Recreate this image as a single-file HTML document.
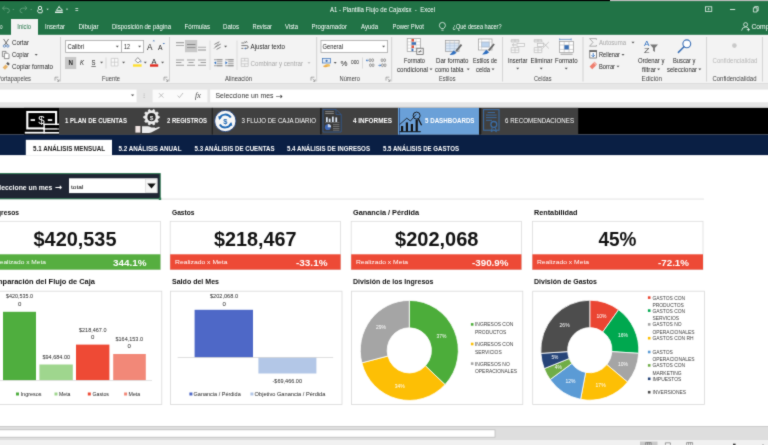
<!DOCTYPE html>
<html lang="es"><head><meta charset="utf-8"><title>Plantilla Flujo de Caja - Excel</title>
<style>
html,body{margin:0;padding:0;}
body{width:768px;height:445px;overflow:hidden;background:#fff;position:relative;font-family:"Liberation Sans", sans-serif;}
#r{position:absolute;left:-4px;top:-4px;width:776px;height:453px;filter:url(#soft);will-change:transform;}
#i{position:absolute;left:4px;top:4px;width:768px;height:445px;}
#i svg{position:absolute;left:0;top:0;overflow:visible;}
text{white-space:pre;}
</style></head>
<body><svg width="0" height="0" style="position:absolute"><filter id="soft" x="0" y="0" width="1" height="1" color-interpolation-filters="sRGB"><feConvolveMatrix order="3" kernelMatrix="1 4 1 4 26 4 1 4 1" divisor="46" edgeMode="duplicate" preserveAlpha="true"/></filter></svg><div id="r"><div id="i">
<svg width="768" height="445" viewBox="0 0 768 445">
<g id="shapes">
<rect x="-5" y="-5" width="778" height="455" fill="#fff" />
<rect x="-5" y="-5" width="778" height="39.9" fill="#217346" />
<rect x="-5" y="-5" width="615" height="6.1" fill="#000" />
<rect x="610" y="-5" width="163" height="6.1" fill="#bdbdbd" />
<rect x="11" y="19" width="27" height="16.5" fill="#f3f3f3" />
<rect x="-5" y="34.9" width="778" height="48.1" fill="#f3f3f3" />
<rect x="-5" y="83" width="778" height="25" fill="#e6e6e6" />
<rect x="-5" y="89.6" width="141.6" height="12.7" fill="#fff" />
<rect x="152.6" y="89.6" width="54.8" height="12.7" fill="#fbfbfb" />
<rect x="210.2" y="89.6" width="562.8" height="12.7" fill="#fff" />
<rect x="-5" y="83" width="778" height="0.9" fill="#dcdcdc" />
<rect x="-5" y="106.6" width="778" height="1.3" fill="#d6d6d6" />
<rect x="-5" y="107.9" width="778" height="26.7" fill="#000" />
<rect x="-5" y="134.6" width="778" height="20.5" fill="#0a1f44" />
<rect x="59" y="107.9" width="261.4" height="26.7" fill="#404040" />
<rect x="211.7" y="107.9" width="1.2" height="26.7" fill="#232323" />
<rect x="320.4" y="107.9" width="1.2" height="26.7" fill="#222" />
<rect x="321.6" y="107.9" width="76.4" height="26.7" fill="#404040" />
<rect x="398" y="107.9" width="81" height="26.7" fill="#6aa0d8" />
<rect x="479" y="107.9" width="2.2" height="26.7" fill="#1c1c1c" />
<rect x="481.2" y="107.9" width="97" height="26.7" fill="#404040" />
<rect x="25.8" y="139.8" width="86.2" height="15.6" fill="#fff" />
<rect x="160" y="198.6" width="544" height="0.9" fill="#e2e2e2" />
<rect x="-5" y="173.6" width="165.2" height="25.2" fill="#1f2533" stroke="#2d7a52" stroke-width="1"/>
<rect x="69" y="178.3" width="88.5" height="14.8" fill="#fff" />
<rect x="145.6" y="179" width="11.4" height="13.4" fill="#f6f6f6" stroke="#c9c9c9" stroke-width="0.5"/>
<path d="M147.3 183.5h8.4l-4.2 4.9z" fill="#111"/>
<rect x="158.8" y="197.6" width="2.4" height="2.4" fill="#2d7a52" />
<rect x="-5" y="221.3" width="165.4" height="48.3" fill="#fff" stroke="#dcdcdc" stroke-width="0.8"/>
<rect x="-5" y="254.3" width="165.4" height="15.3" fill="#56ae40" />
<rect x="170.2" y="221.3" width="170.4" height="48.3" fill="#fff" stroke="#dcdcdc" stroke-width="0.8"/>
<rect x="170.2" y="254.3" width="170.4" height="15.3" fill="#ed4a36" />
<rect x="351.2" y="221.3" width="170.2" height="48.3" fill="#fff" stroke="#dcdcdc" stroke-width="0.8"/>
<rect x="351.2" y="254.3" width="170.2" height="15.3" fill="#ed4a36" />
<rect x="532.4" y="221.3" width="170.6" height="48.3" fill="#fff" stroke="#dcdcdc" stroke-width="0.8"/>
<rect x="532.4" y="254.3" width="170.6" height="15.3" fill="#ed4a36" />
<rect x="-5" y="291.2" width="166.8" height="113.2" fill="#fff" stroke="#d9d9d9" stroke-width="0.8"/>
<rect x="170.5" y="291.2" width="171.5" height="113.2" fill="#fff" stroke="#d9d9d9" stroke-width="0.8"/>
<rect x="351.5" y="291.2" width="171.3" height="113.2" fill="#fff" stroke="#d9d9d9" stroke-width="0.8"/>
<rect x="532.7" y="291.2" width="171.7" height="113.2" fill="#fff" stroke="#d9d9d9" stroke-width="0.8"/>
<rect x="3" y="311.8" width="33" height="68.4" fill="#4fae3e" />
<rect x="39.4" y="364.5" width="33.4" height="15.7" fill="#9fd68e" />
<rect x="76" y="344.6" width="33.4" height="35.6" fill="#ee4a35" />
<rect x="113.2" y="354" width="32.6" height="26.2" fill="#f28878" />
<rect x="-5" y="380.1" width="157" height="0.7" fill="#d9d9d9" />
<rect x="194.6" y="309.8" width="58.4" height="47.6" fill="#4e68c7" />
<rect x="258.4" y="357.4" width="58" height="16.1" fill="#b3c7e7" />
<rect x="177.7" y="357.1" width="155.5" height="0.7" fill="#d0d0d0" />
<rect x="16.0" y="392.5" width="3" height="3" fill="#4fae3e" />
<rect x="54.5" y="392.5" width="3" height="3" fill="#9fd68e" />
<rect x="87.8" y="392.5" width="3" height="3" fill="#ee4a35" />
<rect x="124.1" y="392.5" width="3" height="3" fill="#f28878" />
<rect x="189.4" y="392.5" width="3" height="3" fill="#4e68c7" />
<rect x="250.4" y="392.5" width="3" height="3" fill="#b3c7e7" />
<g transform="translate(409.3 350.4) scale(0.98 1) translate(-409.3 -350.4)"><path d="M409.30 300.40A50 50 0 0 1 445.75 384.63L425.77 365.87A22.6 22.6 0 0 0 409.30 327.80Z" fill="#4cad3a" stroke="#fff" stroke-width="0.8"/>
<path d="M445.75 384.63A50 50 0 0 1 360.87 362.83L387.41 356.02A22.6 22.6 0 0 0 425.77 365.87Z" fill="#fdbf05" stroke="#fff" stroke-width="0.8"/>
<path d="M360.87 362.83A50 50 0 0 1 409.30 300.40L409.30 327.80A22.6 22.6 0 0 0 387.41 356.02Z" fill="#a5a5a5" stroke="#fff" stroke-width="0.8"/></g>
<g transform="translate(589.8 350.2) scale(0.98 1) translate(-589.8 -350.2)"><path d="M589.80 300.20A50 50 0 0 1 619.19 309.75L603.08 331.92A22.6 22.6 0 0 0 589.80 327.60Z" fill="#ea4532" stroke="#fff" stroke-width="0.8"/>
<path d="M619.19 309.75A50 50 0 0 1 639.70 353.34L612.36 351.62A22.6 22.6 0 0 0 603.08 331.92Z" fill="#00a84f" stroke="#fff" stroke-width="0.8"/>
<path d="M639.70 353.34A50 50 0 0 1 628.33 382.07L607.21 364.61A22.6 22.6 0 0 0 612.36 351.62Z" fill="#a5a5a5" stroke="#fff" stroke-width="0.8"/>
<path d="M628.33 382.07A50 50 0 0 1 580.43 399.31L585.57 372.40A22.6 22.6 0 0 0 607.21 364.61Z" fill="#fdbf05" stroke="#fff" stroke-width="0.8"/>
<path d="M580.43 399.31A50 50 0 0 1 549.35 379.59L571.52 363.48A22.6 22.6 0 0 0 585.57 372.40Z" fill="#5b9bd5" stroke="#fff" stroke-width="0.8"/>
<path d="M549.35 379.59A50 50 0 0 1 543.31 368.61L568.79 358.52A22.6 22.6 0 0 0 571.52 363.48Z" fill="#70ad47" stroke="#fff" stroke-width="0.8"/>
<path d="M543.31 368.61A50 50 0 0 1 539.90 353.34L567.24 351.62A22.6 22.6 0 0 0 568.79 358.52Z" fill="#264478" stroke="#fff" stroke-width="0.8"/>
<path d="M539.90 353.34A50 50 0 0 1 589.80 300.20L589.80 327.60A22.6 22.6 0 0 0 567.24 351.62Z" fill="#4d4d4d" stroke="#fff" stroke-width="0.8"/></g>
<rect x="-5" y="426.2" width="778" height="14.3" fill="#dedede" />
<rect x="-5" y="426.2" width="778" height="0.8" fill="#c6c6c6" />
<rect x="-5" y="429.8" width="500" height="7.4" fill="#fff" stroke="#bdbdbd" stroke-width="0.8"/>
<rect x="-5" y="440.5" width="778" height="9.5" fill="#f1f1f1" />
<rect x="640" y="441.6" width="17.5" height="8.4" fill="#c8c8c8" />
<rect x="60.05" y="37" width="0.9" height="44.5" fill="#cfcfcf" />
<rect x="169.05" y="37" width="0.9" height="44.5" fill="#cfcfcf" />
<rect x="316.25" y="37" width="0.9" height="44.5" fill="#cfcfcf" />
<rect x="391.25" y="37" width="0.9" height="44.5" fill="#cfcfcf" />
<rect x="502.15" y="37" width="0.9" height="44.5" fill="#cfcfcf" />
<rect x="582.55" y="37" width="0.9" height="44.5" fill="#cfcfcf" />
<rect x="706.15" y="37" width="0.9" height="44.5" fill="#cfcfcf" />
<rect x="761.95" y="37" width="0.9" height="44.5" fill="#cfcfcf" />
<rect x="105.55" y="57.5" width="0.9" height="11.0" fill="#d6d6d6" />
<rect x="209.55" y="40.5" width="0.9" height="29.5" fill="#dadada" />
<rect x="236.55" y="40.5" width="0.9" height="29.5" fill="#dadada" />
<rect x="362.05" y="57.5" width="0.9" height="11.0" fill="#d6d6d6" />
<rect x="65.6" y="40.4" width="55.8" height="12.0" fill="#fff" stroke="#a9a9a9" stroke-width="0.8"/>
<rect x="121.4" y="40.4" width="22.2" height="12.0" fill="#fff" stroke="#a9a9a9" stroke-width="0.8"/>
<rect x="321" y="40.4" width="66.6" height="12.0" fill="#fff" stroke="#a9a9a9" stroke-width="0.8"/>
<path d="M115.8 45.85h3.0l-1.5 1.5750000000000002z" fill="#555"/>
<path d="M138.1 45.85h3.0l-1.5 1.5750000000000002z" fill="#555"/>
<path d="M382.1 45.85h3.0l-1.5 1.5750000000000002z" fill="#555"/>
<path d="M100.1 61.85h3.0l-1.5 1.5750000000000002z" fill="#555"/>
<path d="M122.1 61.85h3.0l-1.5 1.5750000000000002z" fill="#555"/>
<path d="M143.8 61.85h3.0l-1.5 1.5750000000000002z" fill="#555"/>
<path d="M161.1 61.85h3.0l-1.5 1.5750000000000002z" fill="#555"/>
<path d="M224.1 45.85h3.0l-1.5 1.5750000000000002z" fill="#555"/>
<path d="M333.7 62.05h3.0l-1.5 1.5750000000000002z" fill="#555"/>
<path d="M429.5 68.55h3.0l-1.5 1.5750000000000002z" fill="#555"/>
<path d="M466.7 68.55h3.0l-1.5 1.5750000000000002z" fill="#555"/>
<path d="M491.5 68.55h3.0l-1.5 1.5750000000000002z" fill="#555"/>
<path d="M516.2 67.85h3.0l-1.5 1.5750000000000002z" fill="#555"/>
<path d="M539.7 67.85h3.0l-1.5 1.5750000000000002z" fill="#555"/>
<path d="M564.7 67.85h3.0l-1.5 1.5750000000000002z" fill="#555"/>
<path d="M631.5 41.85h3.0l-1.5 1.5750000000000002z" fill="#555"/>
<path d="M621.5 54.05h3.0l-1.5 1.5750000000000002z" fill="#555"/>
<path d="M616.5 65.65h3.0l-1.5 1.5750000000000002z" fill="#555"/>
<path d="M657.1 68.55h3.0l-1.5 1.5750000000000002z" fill="#555"/>
<path d="M698.3 68.55h3.0l-1.5 1.5750000000000002z" fill="#555"/>
<path d="M34.7 54.05h3.0l-1.5 1.5750000000000002z" fill="#555"/>
<path d="M307.5 62.25h3.0l-1.5 1.5750000000000002z" fill="#b5b5b5"/>
<rect x="65" y="57" width="11.2" height="12" fill="#c8c8c8" />
<rect x="185" y="40" width="12.2" height="12.2" fill="#c8c8c8" />
<path d="M55 80.6v-3.4h3.4M56.6 78.8l2.4 2.4m0.1 -1.9v2h-2" stroke="#777" stroke-width="0.6" fill="none"/>
<path d="M164 80.6v-3.4h3.4M165.6 78.8l2.4 2.4m0.1 -1.9v2h-2" stroke="#777" stroke-width="0.6" fill="none"/>
<path d="M311 80.6v-3.4h3.4M312.6 78.8l2.4 2.4m0.1 -1.9v2h-2" stroke="#777" stroke-width="0.6" fill="none"/>
<path d="M386 80.6v-3.4h3.4M387.6 78.8l2.4 2.4m0.1 -1.9v2h-2" stroke="#777" stroke-width="0.6" fill="none"/>
<rect x="91.4" y="66" width="4.4" height="0.6" fill="#333" />
<g stroke="#3a6fb5" stroke-width="0.7" fill="none"><circle cx="4.4" cy="46" r="1.2"/><circle cx="7.8" cy="46" r="1.2"/></g><path d="M3.6 39l4 6M8.6 39l-4 6" stroke="#555" stroke-width="0.8" fill="none"/>
<path d="M2.4 51.4h3.6v1.4M2.4 51.4v5.2h1.4" stroke="#666" stroke-width="0.7" fill="none"/><path d="M4.4 53.2h3.4l1.2 1.2v4.2h-4.6z" fill="#fff" stroke="#666" stroke-width="0.7"/>
<path d="M2.6 67.4l3-3 2.4 2.4-3 3z" fill="#e8b469"/><path d="M6.2 63.6l1.6-1.6 2 2-1.6 1.6z" fill="#555"/>
<path d="M152.6 41.2l1.2-1.3 1.2 1.3z" fill="#3a6fb5"/><path d="M162.6 43l1.2 1.3 1.2-1.3z" fill="#3a6fb5"/>
<path d="M111.2 58.4h6.8v7.6h-6.8zM114.6 58.4v7.6M111.2 62.2h6.8" stroke="#c4c4c4" stroke-width="0.7" fill="#fafafa"/>
<path d="M135.2 60.4l2.6-2.8 2.8 2.8-2.6 2.6z" fill="#fdfdfd" stroke="#666" stroke-width="0.7"/><path d="M140.9 60.6q1 1.5 0 2.2q-1-0.7 0-2.2z" fill="#3a6fb5"/>
<rect x="133" y="64.3" width="8.6" height="2.4" fill="#ffdf2e" />
<rect x="150" y="64.3" width="8.2" height="2.4" fill="#e0291d" />
<rect x="176" y="42.4" width="8" height="0.8" fill="#777" />
<rect x="176" y="45.2" width="8" height="0.8" fill="#9a9a9a" />
<rect x="187" y="44.2" width="8.4" height="0.8" fill="#777" />
<rect x="187" y="47" width="8.4" height="0.8" fill="#8a8a8a" />
<rect x="198" y="46.8" width="8" height="0.8" fill="#9a9a9a" />
<rect x="198" y="49.6" width="8" height="0.8" fill="#777" />
<rect x="176" y="59.6" width="8" height="0.8" fill="#8a8a8a" />
<rect x="176" y="62.2" width="5.4" height="0.8" fill="#8a8a8a" />
<rect x="176" y="64.8" width="8" height="0.8" fill="#8a8a8a" />
<rect x="187.0" y="59.6" width="8" height="0.8" fill="#8a8a8a" />
<rect x="188.5" y="62.2" width="5" height="0.8" fill="#8a8a8a" />
<rect x="187.0" y="64.8" width="8" height="0.8" fill="#8a8a8a" />
<rect x="198" y="59.6" width="8" height="0.8" fill="#8a8a8a" />
<rect x="200.6" y="62.2" width="5.4" height="0.8" fill="#8a8a8a" />
<rect x="198" y="64.8" width="8" height="0.8" fill="#8a8a8a" />
<path d="M214.4 44.4l5-2.6M215.4 47l5.4-3M216.6 49.4l4-2.2" stroke="#666" stroke-width="0.8" fill="none"/><path d="M214 48.6l4.6-5" stroke="#666" stroke-width="0.6"/>
<rect x="217" y="59.4" width="5.4" height="0.8" fill="#8a8a8a" />
<rect x="217" y="61.4" width="5.4" height="0.8" fill="#8a8a8a" />
<rect x="217" y="63.4" width="5.4" height="0.8" fill="#8a8a8a" />
<rect x="217" y="65.4" width="5.4" height="0.8" fill="#8a8a8a" />
<rect x="214" y="59.4" width="8.4" height="0.8" fill="#8a8a8a" />
<rect x="214" y="65.4" width="8.4" height="0.8" fill="#8a8a8a" />
<rect x="228.2" y="59.4" width="5.4" height="0.8" fill="#8a8a8a" />
<rect x="228.2" y="61.4" width="5.4" height="0.8" fill="#8a8a8a" />
<rect x="228.2" y="63.4" width="5.4" height="0.8" fill="#8a8a8a" />
<rect x="228.2" y="65.4" width="5.4" height="0.8" fill="#8a8a8a" />
<rect x="225.2" y="59.4" width="8.4" height="0.8" fill="#8a8a8a" />
<rect x="225.2" y="65.4" width="8.4" height="0.8" fill="#8a8a8a" />
<path d="M214 62.8l2.2-1.6v3.2z" fill="#2f6fc0"/><path d="M227.6 62.8l-2.2-1.6v3.2z" fill="#2f6fc0"/>
<path d="M241.4 43h3M241.4 45.6h5.4q1.4 0 1.4 1.4t-1.4 1.4h-1.6M241.4 48.4h2" stroke="#555" stroke-width="0.8" fill="none"/><path d="M245.6 47.2v2.4l-1.4-1.2z" fill="#3a6fb5"/><path d="M244.6 41.4l0.8 1.6 1-1.8 0.9 1.6" stroke="#555" stroke-width="0.6" fill="none"/>
<path d="M241.2 58.4h7v8h-7zM241.2 61h7M241.2 63.8h7M244.7 58.4v2.6M244.7 63.8v2.6" stroke="#bdbdbd" stroke-width="0.7" fill="#f6f6f6"/>
<rect x="322.6" y="58.6" width="8" height="4.4" fill="#dfe9f6" stroke="#3a6fb5" stroke-width="0.7"/><circle cx="326.6" cy="60.8" r="1.1" fill="#3a6fb5"/><ellipse cx="327.6" cy="65.4" rx="2.6" ry="1.3" fill="#f0c060"/><ellipse cx="325.4" cy="66.2" rx="2.2" ry="1" fill="#e8a94a"/>
<g fill="none" stroke="#666" stroke-width="0.6"><rect x="369.2" y="58.8" width="1.7" height="2.8" rx="0.8"/><rect x="371.8" y="58.8" width="1.7" height="2.8" rx="0.8"/><rect x="369.6" y="63.8" width="1.7" height="2.8" rx="0.8"/><rect x="372.2" y="63.8" width="1.7" height="2.8" rx="0.8"/></g>
<g fill="none" stroke="#666" stroke-width="0.6"><rect x="381.2" y="58.8" width="1.7" height="2.8" rx="0.8"/><rect x="383.8" y="58.8" width="1.7" height="2.8" rx="0.8"/><rect x="381.6" y="63.8" width="1.7" height="2.8" rx="0.8"/><rect x="384.2" y="63.8" width="1.7" height="2.8" rx="0.8"/></g>
<path d="M366.2 60.400h2.400M366.200 60.400l1.100-1M366.200 60.400l1.100 1" stroke="#2f6fc0" stroke-width="0.7" fill="none"/><path d="M378.400 65.400h2.400M380.800 65.400l-1.100-1M380.800 65.400l-1.100 1" stroke="#2f6fc0" stroke-width="0.7" fill="none"/>
<rect x="407.2" y="38.6" width="13.4" height="13" fill="#fff" stroke="#9a9a9a" stroke-width="0.7"/><path d="M407.2 41.8h13.4M407.2 45h13.4M407.2 48.2h13.4M411.4 38.6v13M416 38.6v13" stroke="#bbb" stroke-width="0.5"/><rect x="411.6" y="39" width="2.4" height="2.6" fill="#e0533c"/><rect x="411.6" y="42.2" width="4.4" height="2.6" fill="#3a6fb5"/><rect x="411.6" y="45.4" width="2.4" height="2.6" fill="#e0533c"/><rect x="411.6" y="48.6" width="1.8" height="2.6" fill="#3a6fb5"/><rect x="416.8" y="48.2" width="6.4" height="6.2" fill="#f5f5f5" stroke="#555" stroke-width="0.7"/><path d="M418.4 51.6h3.2M418.8 52.8l2.4-3" stroke="#444" stroke-width="0.6"/>
<rect x="445.4" y="40.6" width="13.6" height="10.8" fill="#dbe7f5" stroke="#9a9a9a" stroke-width="0.7"/><rect x="445.4" y="40.6" width="13.6" height="2.4" fill="#f4f4f4" stroke="#9a9a9a" stroke-width="0.5"/><path d="M445.4 45.8h13.6M445.4 48.6h13.6M449.9 40.6v10.8M454.4 40.6v10.8" stroke="#a9bcd6" stroke-width="0.5"/><path d="M455.4 50.6l5.4-6.6 1.4 1.2-5.2 6.4z" fill="#666"/><path d="M449.6 55l4-4.6 3 2.4q-2.4 2.6-7 2.2z" fill="#2f6fc0"/>
<rect x="478.4" y="39" width="13.6" height="11" fill="#fff" stroke="#9a9a9a" stroke-width="0.7"/><rect x="481.6" y="42" width="7.6" height="5" fill="#bcd4ef" stroke="#8aa8cf" stroke-width="0.5"/><path d="M478.400 42h13.6M478.4 47h13.6M481.6 39v11M489.2 39v11" stroke="#c4c4c4" stroke-width="0.5"/><path d="M488 50l5.400-6.600 1.400 1.200-5.200 6.400z" fill="#666"/><path d="M482.2 54.400l4-4.600 3 2.400q-2.400 2.600-7 2.200z" fill="#2f6fc0"/>
<path d="M511.2 39.6h7.6v2.4h-7.6zM515.0 39.6v2.4M511.2 40.800000000000004h7.6" stroke="#bdbdbd" stroke-width="0.7" fill="#f8f8f8"/>
<rect x="517" y="43.4" width="7.4" height="3" fill="#f8f8f8" stroke="#bdbdbd" stroke-width="0.7"/>
<path d="M511.2 47.6h7.6v5h-7.6zM515.0 47.6v5M511.2 50.1h7.6" stroke="#bdbdbd" stroke-width="0.7" fill="#f8f8f8"/>
<path d="M516.2 44.900h-3.800m1.500-1.400l-1.500 1.400 1.500 1.400" stroke="#b0b0b0" stroke-width="0.7" fill="none"/>
<path d="M534.2 39.6h7.6v2.4h-7.6zM538.0 39.6v2.4M534.2 40.800000000000004h7.6" stroke="#bdbdbd" stroke-width="0.7" fill="#f8f8f8"/>
<rect x="537.6" y="43.4" width="6" height="3" fill="#f8f8f8" stroke="#bdbdbd" stroke-width="0.7"/>
<path d="M534.2 47.6h7.6v5h-7.6zM538.0 47.6v5M534.2 50.1h7.6" stroke="#bdbdbd" stroke-width="0.7" fill="#f8f8f8"/>
<path d="M542.4 42l6.400 6.400M548.8 42l-6.400 6.400" stroke="#b0b0b0" stroke-width="0.7" fill="none"/>
<rect x="559.6" y="41.600" width="14" height="11" fill="#fff" stroke="#9a9a9a" stroke-width="0.7"/><path d="M564.2 41.600v11M569 41.600v11M559.6 45h14M559.6 49.400h14" stroke="#aaa" stroke-width="0.5"/><rect x="564.400" y="45.200" width="4.400" height="4.200" fill="#3a6fb5"/><path d="M559.6 39.400h11.600M559.6 38.400v2M571.2 38.400v2" stroke="#3a6fb5" stroke-width="0.6"/><path d="M560.6 54.200h12" stroke="#777" stroke-width="0.7"/>
<path d="M596.4 39.800v-1.200h-6.800l3.400 3.700-3.400 3.900h6.800v-1.200" stroke="#9a9a9a" stroke-width="0.8" fill="none"/>
<rect x="589.8" y="50.600" width="6.800" height="7.400" fill="#fff" stroke="#555" stroke-width="0.7"/><rect x="589.8" y="50.600" width="6.800" height="1.300" fill="#555"/><path d="M593.2 53v3.600m-1.600-1.400l1.600 1.600 1.600-1.600" stroke="#2f6fc0" stroke-width="0.9" fill="none"/>
<path d="M589.600 66.600l3.800-3.800 2.600 2.600-3.800 3.800z" fill="#ef7e6e"/><path d="M593.4 62.800l1.200-1.200 2.600 2.600-1.200 1.200z" fill="#f4a79c"/>
<path d="M650 44.400h8l-3.100 3.600v4l-1.800-1.200v-2.800z" fill="#777"/>
<circle cx="686.8" cy="43.800" r="3.900" fill="#fff" stroke="#3a6fb5" stroke-width="1.100"/><path d="M684 46.800l-5.600 5.600" stroke="#3a6fb5" stroke-width="1.500" stroke-linecap="round"/>
<circle cx="734.4" cy="45.600" r="2.300" fill="#c9c9c9"/>
<g stroke="#6aa583" stroke-width="0.8" fill="none"><path d="M2.600 8.200h4.200q2.600 0.200 2.600 2.400t-2.400 2.200M4.600 6.200l-2.200 2 2.200 2"/><path d="M26.800 8.200h-4.200q-2.600 0.200-2.600 2.400t2.400 2.200M24.800 6.200l2.200 2-2.200 2"/></g>
<path d="M12.4 8.9h2l-1 1.05z" fill="#6aa583"/>
<path d="M30.2 8.9h2l-1 1.05z" fill="#6aa583"/>
<g stroke="#fff" stroke-width="0.9" fill="none"><circle cx="40" cy="8" r="1.700"/><path d="M38 9.600q-1 1.800 0.600 3.200h3.200q1-1.600 0.200-3.200"/></g>
<path d="M46.5 8.85h2.2l-1.1 1.1550000000000002z" fill="#fff"/>
<path d="M56.400 10.400l2.400-3.400 2.600 1.800 1 1.600z" fill="none" stroke="#fff" stroke-width="0.8"/><path d="M58.800 7l0.600-1.200" stroke="#fff" stroke-width="0.7"/>
<rect x="55" y="11.6" width="7.8" height="1.3" fill="#fff" />
<path d="M65.9 8.85h2.2l-1.1 1.1550000000000002z" fill="#fff"/>
<rect x="75.4" y="8.2" width="2.8" height="0.7" fill="#fff" />
<rect x="75.4" y="10.2" width="2.8" height="0.7" fill="#fff" />
<rect x="705.4" y="6.800" width="6.400" height="4.800" fill="none" stroke="#fff" stroke-width="0.7"/><path d="M708.600 8.200v2.200m-1-1l1-1.100 1 1.100" stroke="#fff" stroke-width="0.600" fill="none"/>
<rect x="730" y="9.2" width="5.2" height="0.8" fill="#fff" />
<path d="M753.400 7.800h3.600v4.200h-3.600zM754.600 7.800v-1.200h3.600v4.200h-1.200" stroke="#fff" stroke-width="0.700" fill="none"/>
<path d="M441.200 28.600q-1.800-1.600-1.800-3.200a3 3 0 0 1 6 0q0 1.600-1.800 3.200zM441.400 30.200h2.200" stroke="#fff" stroke-width="0.700" fill="none"/>
<g stroke="#fff" stroke-width="0.700" fill="none"><circle cx="745.6" cy="24.600" r="2"/><path d="M741.600 30.600q0.400-3.600 4-3.600q1.600 0 2.600 1"/><path d="M746.800 29.600h3.200M748.400 28v3.200"/></g>
<g stroke="#b0b0b0" stroke-width="0.800" fill="none"><path d="M159 93.200l4.400 4.400M163.400 93.200l-4.400 4.400"/><path d="M177.600 95.600l1.800 2 3.600-4.600"/></g>
<path d="M130.9 94.55000000000001h3.4l-1.7 1.785z" fill="#555"/>
<rect x="143.7" y="93.6" width="0.8" height="0.8" fill="#a0a0a0" />
<rect x="143.7" y="95.4" width="0.8" height="0.8" fill="#a0a0a0" />
<rect x="143.7" y="97.2" width="0.8" height="0.8" fill="#a0a0a0" />
<g stroke="#666" stroke-width="0.6" fill="none"><path d="M645.600 445v-2.400h5.600v2.400M647.500 442.600v2.400M649.300 442.600v2.400"/><path d="M665.400 445v-2.200h5v2.200"/><path d="M686.600 445v-2.400h6v2.400M688.600 442.600v2.400M690.600 442.600v2.400"/></g>
<rect x="733" y="443.6" width="2.6" height="6.4" fill="#444" />
<rect x="762.6" y="444.2" width="0.8" height="5.8" fill="#777" />
<rect x="24" y="107.9" width="35" height="26.7" fill="#000" />
<rect x="27.300" y="112" width="28.800" height="16.400" fill="none" stroke="#fff" stroke-width="2.100"/>
<rect x="30.6" y="119.2" width="4.4" height="1.7" fill="#fff" />
<rect x="47.8" y="119.2" width="4.4" height="1.7" fill="#fff" />
<rect x="43.4" y="123.6" width="15.6" height="1.5" fill="#fff" />
<rect x="43.4" y="123.6" width="1.5" height="9.8" fill="#fff" />
<rect x="43.4" y="128.3" width="15.6" height="1.4" fill="#fff" />
<rect x="24.8" y="131.8" width="34.2" height="1.8" fill="#fff" />
<rect x="44.9" y="125.1" width="14.1" height="3.2" fill="#000" />
<rect x="44.9" y="129.7" width="14.1" height="2.1" fill="#000" />
<polygon points="159.37,116.57 159.38,117.81 157.65,118.67 157.34,119.61 158.24,121.32 157.51,122.32 155.61,122.00 154.81,122.58 154.53,124.49 153.36,124.88 152.01,123.50 151.01,123.50 149.67,124.88 148.49,124.50 148.21,122.59 147.40,122.01 145.50,122.34 144.77,121.34 145.66,119.63 145.36,118.68 143.63,117.83 143.62,116.59 145.35,115.73 145.66,114.79 144.76,113.08 145.49,112.08 147.39,112.40 148.19,111.82 148.47,109.91 149.64,109.52 150.99,110.90 151.99,110.90 153.33,109.52 154.51,109.90 154.79,111.81 155.60,112.39 157.50,112.06 158.23,113.06 157.34,114.77 157.64,115.72" fill="#ededed" stroke="#ededed" stroke-width="0.8" stroke-linejoin="round"/>
<circle cx="151.500" cy="117.200" r="4.100" fill="#2b2b2b"/>
<rect x="135.4" y="126" width="5" height="6.6" fill="#f0e4e2" />
<path d="M142 126.200h6q2 0.200 3.400 1.200h3.400q1.200 0.500 0.500 1.500l-3 0.400 6.200-2.400q1.500-0.200 1.200 1l-8 4.400q-1.400 0.600-3 0.600h-6.700z" fill="#ececec"/>
<circle cx="225.300" cy="121" r="10.700" fill="#f7f7f7" stroke="#1e3f7a" stroke-width="0.900"/><g fill="none" stroke="#1f68b4" stroke-width="1.900"><path d="M219.400 118.600a6.400 6.400 0 0 1 11.400-1"/><path d="M231.200 123.400a6.400 6.400 0 0 1-11.400 1"/></g><path d="M218.200 116.200l4 0.400-2.800 3.400z" fill="#1f68b4"/><path d="M232.400 125.800l-4-0.400 2.800-3.400z" fill="#1f68b4"/>
<path d="M323 109.400h13l5.200 5.200v17.400h-18.200z" fill="#3a3a3a" stroke="#33598f" stroke-width="0.900"/><path d="M336 109.400v5.200h5.200" fill="none" stroke="#33598f" stroke-width="0.800"/>
<rect x="325.2" y="111.2" width="8.6" height="0.9" fill="#8c8c8c" />
<rect x="325.2" y="113" width="8.6" height="0.9" fill="#8c8c8c" />
<rect x="326" y="117.2" width="1.7" height="4.8" fill="#dfeaf8" />
<rect x="328.8" y="118.6" width="1.7" height="3.4" fill="#dfeaf8" />
<rect x="332" y="116.6" width="1.7" height="5.4" fill="#dfeaf8" />
<rect x="335.4" y="117.4" width="1.7" height="4.6" fill="#dfeaf8" />
<rect x="325" y="122.2" width="14.4" height="0.7" fill="#777" />
<circle cx="327.800" cy="127.200" r="2.900" fill="#3e68b8"/><path d="M327.800 127.200v-3.300a3.300 3.300 0 0 1 3.300 3.300z" fill="#c9d6ee"/>
<rect x="333" y="124.4" width="6.4" height="0.7" fill="#8c8c8c" />
<rect x="333" y="126.2" width="6.4" height="0.7" fill="#8c8c8c" />
<rect x="333" y="128" width="6.4" height="0.7" fill="#8c8c8c" />
<rect x="333" y="129.8" width="6.4" height="0.7" fill="#8c8c8c" />
<rect x="399" y="108" width="0.7" height="26.5" fill="#1e3f7a" />
<rect x="401" y="126" width="2.2" height="5.6" fill="#111" />
<rect x="405.8" y="122.4" width="2.2" height="9.2" fill="#111" />
<rect x="410.8" y="124" width="2.2" height="7.6" fill="#111" />
<rect x="415.6" y="119.6" width="2.2" height="12.0" fill="#111" />
<rect x="399.4" y="131.2" width="21.4" height="1" fill="#111" />
<path d="M399.600 124.600l7.200-6.400 3.600 2.800 5.800-6.600" fill="none" stroke="#111" stroke-width="0.800"/><circle cx="416.600" cy="115.600" r="3.500" fill="none" stroke="#111" stroke-width="0.900"/><path d="M418.400 119l3.200 6.200" stroke="#111" stroke-width="1.300"/>
<rect x="483.600" y="109.600" width="15.400" height="20.600" fill="none" stroke="#3b6ea8" stroke-width="1"/>
<rect x="487.6" y="112" width="7.4" height="0.9" fill="#3b6ea8" />
<rect x="486" y="114.6" width="10.6" height="0.9" fill="#3b6ea8" />
<rect x="486" y="117.2" width="10.6" height="0.9" fill="#3b6ea8" />
<rect x="486" y="119.8" width="6" height="0.9" fill="#3b6ea8" />
<circle cx="493.800" cy="124.400" r="2.900" fill="#3a3a3a" stroke="#3b6ea8" stroke-width="1.300"/><path d="M492.200 127.600l-1 4.200 2.600-1.800 2.600 1.800-1-4.200" fill="none" stroke="#3b6ea8" stroke-width="0.900"/>
<rect x="470.9" y="323.1" width="2.6" height="2.6" fill="#4cad3a" />
<rect x="470.9" y="342.7" width="2.6" height="2.6" fill="#fdbf05" />
<rect x="470.9" y="362.3" width="2.6" height="2.6" fill="#a5a5a5" />
<rect x="647.9" y="296.3" width="2.6" height="2.6" fill="#ea4532" />
<rect x="647.9" y="309.3" width="2.6" height="2.6" fill="#00a84f" />
<rect x="647.9" y="323.1" width="2.6" height="2.6" fill="#a5a5a5" />
<rect x="647.9" y="336.9" width="2.6" height="2.6" fill="#fdbf05" />
<rect x="647.9" y="350.7" width="2.6" height="2.6" fill="#5b9bd5" />
<rect x="647.9" y="364.1" width="2.6" height="2.6" fill="#70ad47" />
<rect x="647.9" y="377.5" width="2.6" height="2.6" fill="#264478" />
<rect x="647.9" y="390.9" width="2.6" height="2.6" fill="#4d4d4d" />
</g>
<g id="labels" font-family='"Liberation Sans", sans-serif'>
<text x="330" y="11.96" font-size="6.6" fill="#fff" textLength="105" lengthAdjust="spacingAndGlyphs">A1 - Plantilla Flujo de Cajaxlsx  -  Excel</text>
<text x="0" y="29.03" font-size="6.8" fill="#fff" textLength="2.5" lengthAdjust="spacingAndGlyphs">o</text>
<text x="17.3" y="29.03" font-size="6.8" fill="#217346" textLength="13.7" lengthAdjust="spacingAndGlyphs">Inicio</text>
<text x="45" y="29.03" font-size="6.8" fill="#fff" textLength="20" lengthAdjust="spacingAndGlyphs">Insertar</text>
<text x="78.5" y="29.03" font-size="6.8" fill="#fff" textLength="20" lengthAdjust="spacingAndGlyphs">Dibujar</text>
<text x="112" y="29.03" font-size="6.8" fill="#fff" textLength="59" lengthAdjust="spacingAndGlyphs">Disposición de página</text>
<text x="184.5" y="29.03" font-size="6.8" fill="#fff" textLength="25.5" lengthAdjust="spacingAndGlyphs">Fórmulas</text>
<text x="223" y="29.03" font-size="6.8" fill="#fff" textLength="16" lengthAdjust="spacingAndGlyphs">Datos</text>
<text x="252.5" y="29.03" font-size="6.8" fill="#fff" textLength="19.5" lengthAdjust="spacingAndGlyphs">Revisar</text>
<text x="285" y="29.03" font-size="6.8" fill="#fff" textLength="13" lengthAdjust="spacingAndGlyphs">Vista</text>
<text x="311.5" y="29.03" font-size="6.8" fill="#fff" textLength="35.5" lengthAdjust="spacingAndGlyphs">Programador</text>
<text x="361" y="29.03" font-size="6.8" fill="#fff" textLength="17" lengthAdjust="spacingAndGlyphs">Ayuda</text>
<text x="392.5" y="29.03" font-size="6.8" fill="#fff" textLength="31.5" lengthAdjust="spacingAndGlyphs">Power Pivot</text>
<text x="452.5" y="29.03" font-size="6.8" fill="#fff" textLength="49" lengthAdjust="spacingAndGlyphs">¿Qué desea hacer?</text>
<text x="751.5" y="29.03" font-size="6.8" fill="#fff" textLength="29.5" lengthAdjust="spacingAndGlyphs">Compartir</text>
<text x="12" y="45.03" font-size="6.8" fill="#262626" textLength="17" lengthAdjust="spacingAndGlyphs">Cortar</text>
<text x="12" y="57.13" font-size="6.8" fill="#262626" textLength="17" lengthAdjust="spacingAndGlyphs">Copiar</text>
<text x="12" y="68.73" font-size="6.8" fill="#262626" textLength="41" lengthAdjust="spacingAndGlyphs">Copiar formato</text>
<text x="-3" y="81.16" font-size="6.6" fill="#444" textLength="34" lengthAdjust="spacingAndGlyphs">Portapapeles</text>
<text x="102" y="81.16" font-size="6.6" fill="#444" textLength="18" lengthAdjust="spacingAndGlyphs">Fuente</text>
<text x="225" y="81.16" font-size="6.6" fill="#444" textLength="27" lengthAdjust="spacingAndGlyphs">Alineación</text>
<text x="339.5" y="81.16" font-size="6.6" fill="#444" textLength="20.5" lengthAdjust="spacingAndGlyphs">Número</text>
<text x="439" y="81.16" font-size="6.6" fill="#444" textLength="16.5" lengthAdjust="spacingAndGlyphs">Estilos</text>
<text x="534" y="81.16" font-size="6.6" fill="#444" textLength="17.5" lengthAdjust="spacingAndGlyphs">Celdas</text>
<text x="641.5" y="81.16" font-size="6.6" fill="#444" textLength="20.5" lengthAdjust="spacingAndGlyphs">Edición</text>
<text x="712.5" y="81.16" font-size="6.6" fill="#444" textLength="44" lengthAdjust="spacingAndGlyphs">Confidencialidad</text>
<text x="67.5" y="48.93" font-size="6.8" fill="#262626" textLength="16.5" lengthAdjust="spacingAndGlyphs">Calibri</text>
<text x="124" y="48.93" font-size="6.8" fill="#262626" textLength="6" lengthAdjust="spacingAndGlyphs">12</text>
<text x="68.5" y="65.03" font-size="6.8" fill="#262626" font-weight="700" textLength="4.5" lengthAdjust="spacingAndGlyphs">N</text>
<text x="80" y="65.03" font-size="6.8" fill="#262626" font-style="italic" textLength="4" lengthAdjust="spacingAndGlyphs">K</text>
<text x="91.5" y="64.83" font-size="6.8" fill="#262626" textLength="4" lengthAdjust="spacingAndGlyphs">S</text>
<text x="147" y="49.74" font-size="8.2" fill="#262626" textLength="5.5" lengthAdjust="spacingAndGlyphs">A</text>
<text x="158" y="49.81" font-size="7" fill="#262626" textLength="4.5" lengthAdjust="spacingAndGlyphs">A</text>
<text x="151.5" y="64.25" font-size="7.4" fill="#262626" textLength="5" lengthAdjust="spacingAndGlyphs">A</text>
<text x="250.5" y="49.03" font-size="6.8" fill="#262626" textLength="34.5" lengthAdjust="spacingAndGlyphs">Ajustar texto</text>
<text x="250.5" y="65.63" font-size="6.8" fill="#a6a6a6" textLength="52.5" lengthAdjust="spacingAndGlyphs">Combinar y centrar</text>
<text x="322.5" y="49.03" font-size="6.8" fill="#262626" textLength="20.5" lengthAdjust="spacingAndGlyphs">General</text>
<text x="340.5" y="65.72" font-size="7.6" fill="#262626" textLength="7" lengthAdjust="spacingAndGlyphs">%</text>
<text x="351" y="64.19" font-size="5" fill="#262626" textLength="8" lengthAdjust="spacingAndGlyphs">000</text>
<text x="404" y="63.03" font-size="6.8" fill="#262626" textLength="21" lengthAdjust="spacingAndGlyphs">Formato</text>
<text x="397" y="71.63" font-size="6.8" fill="#262626" textLength="31" lengthAdjust="spacingAndGlyphs">condicional</text>
<text x="436" y="63.03" font-size="6.8" fill="#262626" textLength="32.5" lengthAdjust="spacingAndGlyphs">Dar formato</text>
<text x="435" y="71.63" font-size="6.8" fill="#262626" textLength="28.5" lengthAdjust="spacingAndGlyphs">como tabla</text>
<text x="473" y="63.03" font-size="6.8" fill="#262626" textLength="24" lengthAdjust="spacingAndGlyphs">Estilos de</text>
<text x="476" y="71.63" font-size="6.8" fill="#262626" textLength="14" lengthAdjust="spacingAndGlyphs">celda</text>
<text x="508" y="63.03" font-size="6.8" fill="#262626" textLength="19.5" lengthAdjust="spacingAndGlyphs">Insertar</text>
<text x="530.5" y="63.03" font-size="6.8" fill="#262626" textLength="22" lengthAdjust="spacingAndGlyphs">Eliminar</text>
<text x="555" y="63.03" font-size="6.8" fill="#262626" textLength="22.5" lengthAdjust="spacingAndGlyphs">Formato</text>
<text x="599" y="45.03" font-size="6.8" fill="#a6a6a6" textLength="27" lengthAdjust="spacingAndGlyphs">Autosuma</text>
<text x="599" y="57.23" font-size="6.8" fill="#262626" textLength="21" lengthAdjust="spacingAndGlyphs">Rellenar</text>
<text x="599" y="68.83" font-size="6.8" fill="#262626" textLength="16" lengthAdjust="spacingAndGlyphs">Borrar</text>
<text x="638" y="63.03" font-size="6.8" fill="#262626" textLength="26.5" lengthAdjust="spacingAndGlyphs">Ordenar y</text>
<text x="642" y="71.63" font-size="6.8" fill="#262626" textLength="14" lengthAdjust="spacingAndGlyphs">filtrar</text>
<text x="673" y="63.03" font-size="6.8" fill="#262626" textLength="22.5" lengthAdjust="spacingAndGlyphs">Buscar y</text>
<text x="667" y="71.63" font-size="6.8" fill="#262626" textLength="30" lengthAdjust="spacingAndGlyphs">seleccionar</text>
<text x="712.5" y="62.89" font-size="6.4" fill="#b8b8b8" textLength="45" lengthAdjust="spacingAndGlyphs">Confidencialidad</text>
<text x="215.5" y="98.01" font-size="7" fill="#333" textLength="58" lengthAdjust="spacingAndGlyphs">Seleccione un mes</text>
<text x="275.8" y="98.66" font-size="8" fill="#333" font-family="DejaVu Sans, sans-serif" textLength="7.2" lengthAdjust="spacingAndGlyphs">→</text>
<text x="195" y="98.32" font-size="7.6" fill="#444" font-style="italic" font-family="Liberation Serif, serif" textLength="5.8" lengthAdjust="spacingAndGlyphs">fx</text>
<text x="65" y="122.96" font-size="6.3" fill="#fff" font-weight="700" textLength="62" lengthAdjust="spacingAndGlyphs">1 PLAN DE CUENTAS</text>
<text x="167" y="122.96" font-size="6.3" fill="#fff" font-weight="700" textLength="40" lengthAdjust="spacingAndGlyphs">2 REGISTROS</text>
<text x="241.5" y="122.96" font-size="6.3" fill="#fff" textLength="74.5" lengthAdjust="spacingAndGlyphs">3 FLUJO DE CAJA DIARIO</text>
<text x="353" y="122.96" font-size="6.3" fill="#fff" font-weight="700" textLength="39" lengthAdjust="spacingAndGlyphs">4 INFORMES</text>
<text x="425" y="122.96" font-size="6.3" fill="#fff" font-weight="700" textLength="49.5" lengthAdjust="spacingAndGlyphs">5 DASHBOARDS</text>
<text x="505" y="122.96" font-size="6.3" fill="#fff" textLength="69" lengthAdjust="spacingAndGlyphs">6 RECOMENDACIONES</text>
<text x="33" y="150.56" font-size="6.6" fill="#222" font-weight="700" textLength="72" lengthAdjust="spacingAndGlyphs">5.1 ANÁLISIS MENSUAL</text>
<text x="118.5" y="150.56" font-size="6.6" fill="#fff" font-weight="700" textLength="63" lengthAdjust="spacingAndGlyphs">5.2 ANÁLISIS ANUAL</text>
<text x="194.5" y="150.56" font-size="6.6" fill="#fff" font-weight="700" textLength="80" lengthAdjust="spacingAndGlyphs">5.3 ANÁLISIS DE CUENTAS</text>
<text x="287" y="150.56" font-size="6.6" fill="#fff" font-weight="700" textLength="83" lengthAdjust="spacingAndGlyphs">5.4 ANÁLISIS DE INGRESOS</text>
<text x="383" y="150.56" font-size="6.6" fill="#fff" font-weight="700" textLength="76" lengthAdjust="spacingAndGlyphs">5.5 ANÁLISIS DE GASTOS</text>
<text x="-9" y="189.65" font-size="7.4" fill="#fff" font-weight="700" textLength="61.4" lengthAdjust="spacingAndGlyphs">Seleccione un mes</text>
<text x="54.8" y="190.21" font-size="8.4" fill="#fff" font-weight="700" font-family="DejaVu Sans, sans-serif" textLength="7.2" lengthAdjust="spacingAndGlyphs">→</text>
<text x="71" y="188.62" font-size="6.2" fill="#000" textLength="12.5" lengthAdjust="spacingAndGlyphs">total</text>
<text x="-9" y="215.35" font-size="7.4" fill="#111" font-weight="700" textLength="28" lengthAdjust="spacingAndGlyphs">Ingresos</text>
<text x="172" y="215.35" font-size="7.4" fill="#111" font-weight="700" textLength="22.5" lengthAdjust="spacingAndGlyphs">Gastos</text>
<text x="353" y="215.35" font-size="7.4" fill="#111" font-weight="700" textLength="66" lengthAdjust="spacingAndGlyphs">Ganancia / Pérdida</text>
<text x="534" y="215.35" font-size="7.4" fill="#111" font-weight="700" textLength="43.5" lengthAdjust="spacingAndGlyphs">Rentabilidad</text>
<text x="33.5" y="245.74" font-size="20.5" fill="#111" font-weight="700" textLength="83" lengthAdjust="spacingAndGlyphs">$420,535</text>
<text x="214" y="245.74" font-size="20.5" fill="#111" font-weight="700" textLength="82.5" lengthAdjust="spacingAndGlyphs">$218,467</text>
<text x="395" y="245.74" font-size="20.5" fill="#111" font-weight="700" textLength="83.5" lengthAdjust="spacingAndGlyphs">$202,068</text>
<text x="598.5" y="245.74" font-size="20.5" fill="#111" font-weight="700" textLength="38" lengthAdjust="spacingAndGlyphs">45%</text>
<text x="-5" y="263.52" font-size="6.2" fill="#fff" textLength="51" lengthAdjust="spacingAndGlyphs">Realizado x Meta</text>
<text x="175" y="263.52" font-size="6.2" fill="#fff" textLength="52.5" lengthAdjust="spacingAndGlyphs">Realizado x Meta</text>
<text x="356" y="263.52" font-size="6.2" fill="#fff" textLength="52" lengthAdjust="spacingAndGlyphs">Realizado x Meta</text>
<text x="537" y="263.52" font-size="6.2" fill="#fff" textLength="52" lengthAdjust="spacingAndGlyphs">Realizado x Meta</text>
<text x="113" y="265.81" font-size="9.8" fill="#fff" font-weight="700" textLength="33.5" lengthAdjust="spacingAndGlyphs">344.1%</text>
<text x="296" y="265.81" font-size="9.8" fill="#fff" font-weight="700" textLength="31.5" lengthAdjust="spacingAndGlyphs">-33.1%</text>
<text x="472" y="265.81" font-size="9.8" fill="#fff" font-weight="700" textLength="36.5" lengthAdjust="spacingAndGlyphs">-390.9%</text>
<text x="658" y="265.81" font-size="9.8" fill="#fff" font-weight="700" textLength="31" lengthAdjust="spacingAndGlyphs">-72.1%</text>
<text x="-14" y="284.05" font-size="7.4" fill="#111" font-weight="700" textLength="109" lengthAdjust="spacingAndGlyphs">Comparación del Flujo de Caja</text>
<text x="172" y="284.05" font-size="7.4" fill="#111" font-weight="700" textLength="47" lengthAdjust="spacingAndGlyphs">Saldo del Mes</text>
<text x="353" y="284.05" font-size="7.4" fill="#111" font-weight="700" textLength="80.5" lengthAdjust="spacingAndGlyphs">División de los Ingresos</text>
<text x="534" y="284.05" font-size="7.4" fill="#111" font-weight="700" textLength="63" lengthAdjust="spacingAndGlyphs">División de Gastos</text>
<text x="644" y="45.65" font-size="7.4" fill="#2f6fc0" textLength="5.5" lengthAdjust="spacingAndGlyphs">A</text>
<text x="644" y="52.65" font-size="7.4" fill="#555" textLength="5.5" lengthAdjust="spacingAndGlyphs">Z</text>
<text x="38.2" y="123.56" font-size="10.5" fill="#fff" textLength="6.4" lengthAdjust="spacingAndGlyphs">$</text>
<text x="149.7" y="119.58" font-size="5.8" fill="#eee" font-weight="700" textLength="3.6" lengthAdjust="spacingAndGlyphs">$</text>
<text x="223.3" y="123.85" font-size="7.4" fill="#1f68b4" font-weight="700" textLength="4.2" lengthAdjust="spacingAndGlyphs">$</text>
<text x="6" y="298.4" font-size="5.6" fill="#262626" textLength="27" lengthAdjust="spacingAndGlyphs">$420,535.0</text>
<text x="17.9" y="306.2" font-size="5.6" fill="#262626" textLength="3.4" lengthAdjust="spacingAndGlyphs">0</text>
<text x="42.5" y="359.2" font-size="5.6" fill="#262626" textLength="27.5" lengthAdjust="spacingAndGlyphs">$94,684.00</text>
<text x="79" y="331.6" font-size="5.6" fill="#262626" textLength="27.5" lengthAdjust="spacingAndGlyphs">$218,467.0</text>
<text x="90.9" y="339.4" font-size="5.6" fill="#262626" textLength="3.4" lengthAdjust="spacingAndGlyphs">0</text>
<text x="115.5" y="340.6" font-size="5.6" fill="#262626" textLength="27.5" lengthAdjust="spacingAndGlyphs">$164,153.0</text>
<text x="127.5" y="348.4" font-size="5.6" fill="#262626" textLength="3.4" lengthAdjust="spacingAndGlyphs">0</text>
<text x="20.6" y="396" font-size="5.6" fill="#262626" textLength="20.9" lengthAdjust="spacingAndGlyphs">Ingresos</text>
<text x="59" y="396" font-size="5.6" fill="#262626" textLength="11.5" lengthAdjust="spacingAndGlyphs">Meta</text>
<text x="92.4" y="396" font-size="5.6" fill="#262626" textLength="16.6" lengthAdjust="spacingAndGlyphs">Gastos</text>
<text x="128.6" y="396" font-size="5.6" fill="#262626" textLength="11.6" lengthAdjust="spacingAndGlyphs">Meta</text>
<text x="210" y="298.4" font-size="5.6" fill="#262626" textLength="28" lengthAdjust="spacingAndGlyphs">$202,068.0</text>
<text x="222.5" y="306.2" font-size="5.6" fill="#262626" textLength="3.4" lengthAdjust="spacingAndGlyphs">0</text>
<text x="272.5" y="383" font-size="5.6" fill="#262626" textLength="29.5" lengthAdjust="spacingAndGlyphs">-$69,466.00</text>
<text x="193.6" y="396" font-size="5.6" fill="#262626" textLength="47.1" lengthAdjust="spacingAndGlyphs">Ganancia / Pérdida</text>
<text x="254.6" y="396" font-size="5.6" fill="#262626" textLength="70.8" lengthAdjust="spacingAndGlyphs">Objetivo Ganancia / Pérdida</text>
<text x="436.4" y="337.8" font-size="5.6" fill="#fff" textLength="10" lengthAdjust="spacingAndGlyphs">37%</text>
<text x="394.8" y="387.6" font-size="5.6" fill="#fff" textLength="10" lengthAdjust="spacingAndGlyphs">34%</text>
<text x="376" y="329.4" font-size="5.6" fill="#fff" textLength="10" lengthAdjust="spacingAndGlyphs">29%</text>
<text x="475" y="326.3" font-size="5.3" fill="#3d3d3d" textLength="38.33" lengthAdjust="spacingAndGlyphs">INGRESOS CON</text>
<text x="475" y="334.1" font-size="5.3" fill="#3d3d3d" textLength="31.39" lengthAdjust="spacingAndGlyphs">PRODUCTOS</text>
<text x="475" y="345.9" font-size="5.3" fill="#3d3d3d" textLength="38.33" lengthAdjust="spacingAndGlyphs">INGRESOS CON</text>
<text x="475" y="353.7" font-size="5.3" fill="#3d3d3d" textLength="26.75" lengthAdjust="spacingAndGlyphs">SERVICIOS</text>
<text x="475" y="365.5" font-size="5.3" fill="#3d3d3d" textLength="34.77" lengthAdjust="spacingAndGlyphs">INGRESOS NO</text>
<text x="475" y="373.3" font-size="5.3" fill="#3d3d3d" textLength="42.17" lengthAdjust="spacingAndGlyphs">OPERACIONALES</text>
<text x="596.4" y="317.8" font-size="5.6" fill="#fff" textLength="10" lengthAdjust="spacingAndGlyphs">10%</text>
<text x="618" y="337.2" font-size="5.6" fill="#fff" textLength="10" lengthAdjust="spacingAndGlyphs">16%</text>
<text x="618" y="366.4" font-size="5.6" fill="#fff" textLength="10" lengthAdjust="spacingAndGlyphs">10%</text>
<text x="595.6" y="387.2" font-size="5.6" fill="#fff" textLength="10" lengthAdjust="spacingAndGlyphs">17%</text>
<text x="565.4" y="383" font-size="5.6" fill="#fff" textLength="10" lengthAdjust="spacingAndGlyphs">12%</text>
<text x="554.8" y="369.4" font-size="5.6" fill="#fff" textLength="7" lengthAdjust="spacingAndGlyphs">4%</text>
<text x="551.4" y="359.2" font-size="5.6" fill="#fff" textLength="7" lengthAdjust="spacingAndGlyphs">5%</text>
<text x="559.6" y="327" font-size="5.6" fill="#fff" textLength="10" lengthAdjust="spacingAndGlyphs">26%</text>
<text x="652.4" y="299.5" font-size="5.3" fill="#3d3d3d" textLength="32.77" lengthAdjust="spacingAndGlyphs">GASTOS CON</text>
<text x="652.4" y="306.9" font-size="5.3" fill="#3d3d3d" textLength="31.39" lengthAdjust="spacingAndGlyphs">PRODUCTOS</text>
<text x="652.4" y="312.5" font-size="5.3" fill="#3d3d3d" textLength="32.77" lengthAdjust="spacingAndGlyphs">GASTOS CON</text>
<text x="652.4" y="319.9" font-size="5.3" fill="#3d3d3d" textLength="26.75" lengthAdjust="spacingAndGlyphs">SERVICIOS</text>
<text x="652.4" y="326.3" font-size="5.3" fill="#3d3d3d" textLength="29.21" lengthAdjust="spacingAndGlyphs">GASTOS NO</text>
<text x="652.4" y="334.1" font-size="5.3" fill="#3d3d3d" textLength="42.17" lengthAdjust="spacingAndGlyphs">OPERACIONALES</text>
<text x="652.4" y="340.1" font-size="5.3" fill="#3d3d3d" textLength="41.24" lengthAdjust="spacingAndGlyphs">GASTOS CON RH</text>
<text x="652.4" y="353.9" font-size="5.3" fill="#3d3d3d" textLength="20.45" lengthAdjust="spacingAndGlyphs">GASTOS</text>
<text x="652.4" y="361.3" font-size="5.3" fill="#3d3d3d" textLength="42.17" lengthAdjust="spacingAndGlyphs">OPERACIONALES</text>
<text x="652.4" y="367.3" font-size="5.3" fill="#3d3d3d" textLength="32.77" lengthAdjust="spacingAndGlyphs">GASTOS CON</text>
<text x="652.4" y="374.5" font-size="5.3" fill="#3d3d3d" textLength="29.3" lengthAdjust="spacingAndGlyphs">MARKETING</text>
<text x="652.4" y="380.7" font-size="5.3" fill="#3d3d3d" textLength="28.93" lengthAdjust="spacingAndGlyphs">IMPUESTOS</text>
<text x="652.4" y="394.1" font-size="5.3" fill="#3d3d3d" textLength="33.68" lengthAdjust="spacingAndGlyphs">INVERSIONES</text>
</g>
</svg>
</div></div></body></html>
